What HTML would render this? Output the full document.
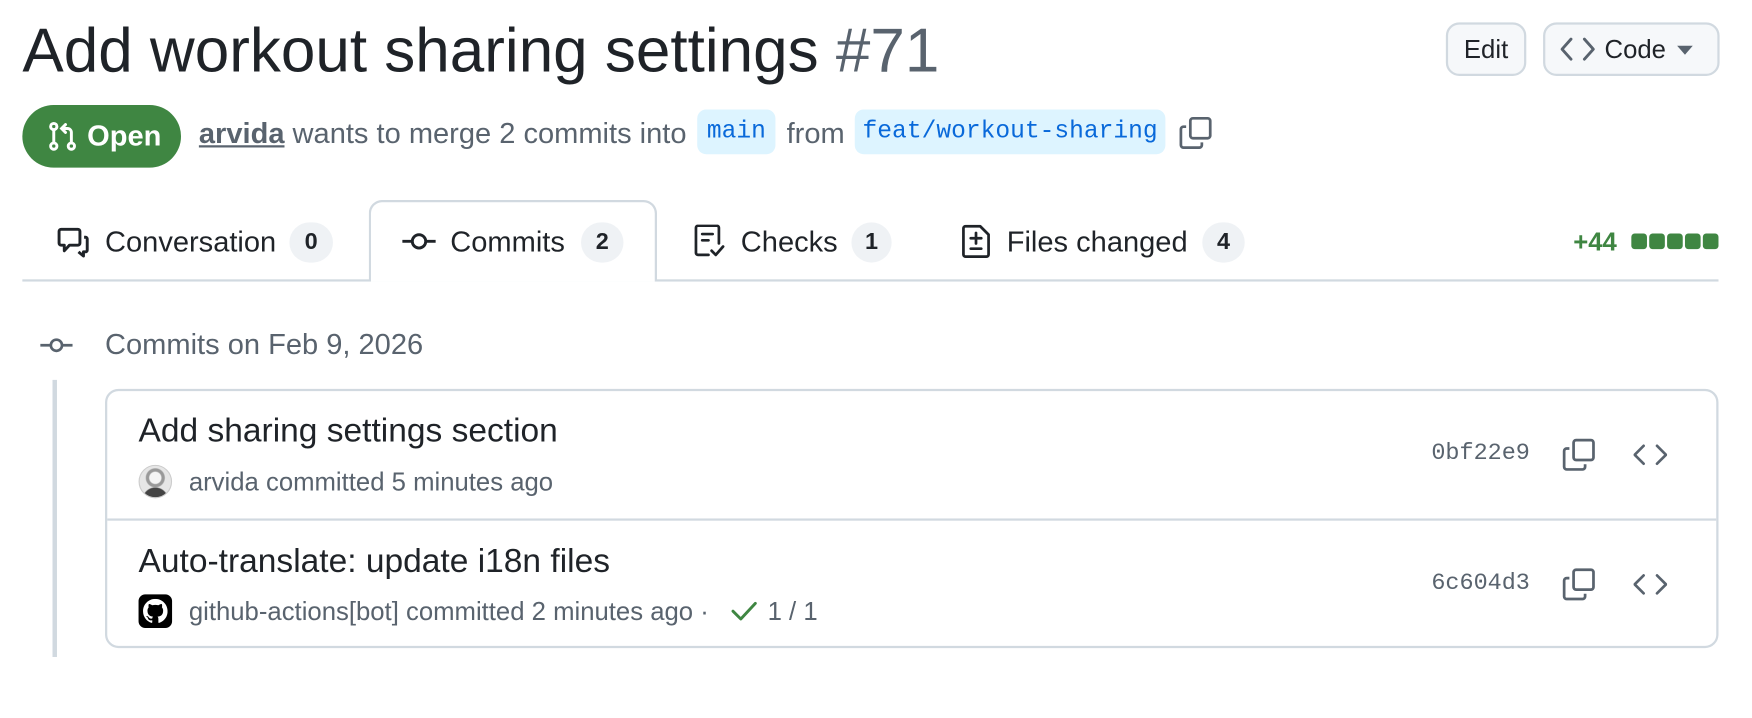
<!DOCTYPE html>
<html><head><meta charset="utf-8"><style>
body{margin:0;width:1752px;height:718px;background:#fff;font-family:"Liberation Sans",Helvetica,Arial,sans-serif;color:#1f2328;position:relative;overflow:hidden}
#w{position:absolute;left:0;top:0;width:1568px;height:643px;transform:scale(1.11735);transform-origin:0 0}
.a{position:absolute;white-space:nowrap}
.mono{font-family:"Liberation Mono","DejaVu Sans Mono",monospace}
.cnt{position:absolute;top:199px;height:36px;border-radius:18px;background:#eff2f5;font-size:21px;font-weight:bold;line-height:36px;text-align:center;color:#1f2328}
.tab{font-size:26px;line-height:26px;top:203px}
.btn{position:absolute;top:20px;height:48px;border:2px solid #d1d9e0;border-radius:12px;background:#f6f8fa;box-sizing:border-box;font-size:23px;line-height:44px}
svg{position:absolute}
</style></head><body><div id="w">
<div class="a" style="left:20px;top:17px;font-size:55.5px;line-height:56px">Add workout sharing settings <span style="color:#59636e">#71</span></div>

<div class="btn" style="left:1294px;width:72px;text-align:center">Edit</div>
<div class="btn" style="left:1381px;width:158px;padding-left:53px">Code</div>
<svg style="left:1396px;top:32px" width="32" height="24" viewBox="0 0 32 24" fill="none" stroke="#59636e" stroke-width="2.6" stroke-linecap="round" stroke-linejoin="round"><path d="M10 3 2 12l8 9M22 3l8 9-8 9"/></svg>
<svg style="left:1500px;top:40px" width="16" height="10" viewBox="0 0 16 10"><path d="M1 1h14L8 9z" fill="#59636e"/></svg>

<div class="a" style="left:20px;top:94px;width:142px;height:56px;border-radius:28px;background:#3f8642;"></div>
<svg style="left:42px;top:108px" width="28" height="28" viewBox="0 0 16 16" fill="none" stroke="#fff" stroke-width="1.5" stroke-linecap="round"><circle cx="3.5" cy="3" r="1.6"/><circle cx="3.5" cy="13" r="1.6"/><circle cx="12.5" cy="13" r="1.6"/><path d="M3.5 4.6v6.8M12.5 11.4V6a2 2 0 0 0-2-2H8M9.5 2 7.5 4l2 2"/></svg>
<div class="a" style="left:78px;top:108px;font-size:26px;line-height:26px;font-weight:bold;color:#fff">Open</div>

<div class="a" style="left:178px;top:106px;font-size:26px;line-height:26px;color:#59636e"><b style="color:#59636e;text-decoration:underline">arvida</b> wants to merge 2 commits into</div>
<div class="a mono" style="left:624px;top:98px;height:40px;width:70px;box-sizing:border-box;text-align:center;border-radius:8px;background:#ddf4ff;color:#0969da;font-size:22px;line-height:40px">main</div>
<div class="a" style="left:704px;top:106px;font-size:26px;line-height:26px;color:#59636e">from</div>
<div class="a mono" style="left:765px;top:98px;height:40px;width:278px;box-sizing:border-box;text-align:center;border-radius:8px;background:#ddf4ff;color:#0969da;font-size:22px;line-height:40px">feat/workout-sharing</div>
<svg style="left:1055px;top:104px" width="30" height="30" viewBox="0 0 16 16" fill="none" stroke="#59636e" stroke-width="1.3" stroke-linejoin="round"><rect x="5.5" y="1" width="9.5" height="9.5" rx="1.2"/><path d="M3.5 5H2.2A1.2 1.2 0 0 0 1 6.2v7.6A1.2 1.2 0 0 0 2.2 15h7.6a1.2 1.2 0 0 0 1.2-1.2V12.5"/></svg>

<div class="a" style="left:20px;top:250px;width:1518px;height:2px;background:#d1d9e0"></div>
<div class="a" style="left:330px;top:179px;width:258px;height:73px;box-sizing:border-box;border:2px solid #d1d9e0;border-bottom:none;border-radius:12px 12px 0 0;background:#fff"></div>

<svg style="left:50px;top:203px" width="30" height="28" viewBox="0 0 16 15" fill="none" stroke="#1f2328" stroke-width="1.4" stroke-linejoin="round"><path d="M1.5 2.2A1 1 0 0 1 2.5 1.2h8a1 1 0 0 1 1 1v5.6a1 1 0 0 1-1 1H6.5L4 11.5V8.8H2.5a1 1 0 0 1-1-1z"/><path d="M13.5 5h.8a.8.8 0 0 1 .7.8v5.4a.8.8 0 0 1-.8.8h-1v2l-2.4-2"/></svg>
<div class="a tab" style="left:94px">Conversation</div>
<div class="cnt" style="left:259px;width:39px">0</div>

<svg style="left:360px;top:204px" width="30" height="24" viewBox="0 0 30 24" fill="none" stroke="#1f2328" stroke-width="2.6"><circle cx="15" cy="12" r="6"/><path d="M0 12h9M21 12h9"/></svg>
<div class="a tab" style="left:403px">Commits</div>
<div class="cnt" style="left:520px;width:38px">2</div>

<svg style="left:621px;top:201px" width="28" height="30" viewBox="0 0 15 16" fill="none" stroke="#1f2328" stroke-width="1.3" stroke-linecap="round" stroke-linejoin="round"><path d="M7 14.5H2a1 1 0 0 1-1-1v-12a1 1 0 0 1 1-1h9a1 1 0 0 1 1 1V9"/><path d="M4 4.5h5M4 7.5h3M8.5 12.5l2 2 3.5-4"/></svg>
<div class="a tab" style="left:663px">Checks</div>
<div class="cnt" style="left:762px;width:36px">1</div>

<svg style="left:860px;top:201px" width="27" height="30" viewBox="0 0 14 16" fill="none" stroke="#1f2328" stroke-width="1.3" stroke-linejoin="round"><path d="M2 .8h7l4 4v9.5a1 1 0 0 1-1 1H2a1 1 0 0 1-1-1V1.8a1 1 0 0 1 1-1z"/><path d="M7 4v5M4.5 6.5h5M4.5 11.5h5" stroke-linecap="round"/></svg>
<div class="a tab" style="left:901px">Files changed</div>
<div class="cnt" style="left:1076px;width:38px">4</div>

<div class="a" style="left:1408px;top:205px;font-size:23px;line-height:23px;font-weight:bold;color:#3f8642">+44</div>
<div class="a" style="left:1460px;top:209px;display:flex;gap:2px">
<span style="width:14px;height:14px;background:#3f8642;border-radius:3px"></span><span style="width:14px;height:14px;background:#3f8642;border-radius:3px"></span><span style="width:14px;height:14px;background:#3f8642;border-radius:3px"></span><span style="width:14px;height:14px;background:#3f8642;border-radius:3px"></span><span style="width:14px;height:14px;background:#3f8642;border-radius:3px"></span></div>

<svg style="left:36px;top:299px" width="29" height="20" viewBox="0 0 29 20" fill="none" stroke="#59636e" stroke-width="2.4"><circle cx="14.5" cy="10" r="5"/><path d="M0 10h9.5M19.5 10h9.5"/></svg>
<div class="a" style="left:94px;top:295px;font-size:26px;line-height:26px;color:#59636e">Commits on Feb 9, 2026</div>
<div class="a" style="left:47px;top:340px;width:4px;height:248px;background:#d1d9e0"></div>

<div class="a" style="left:94px;top:348px;width:1444px;height:232px;box-sizing:border-box;border:2px solid #d1d9e0;border-radius:12px"></div>
<div class="a" style="left:96px;top:464px;width:1440px;height:2px;background:#d1d9e0"></div>

<div class="a" style="left:124px;top:371px;font-size:30px;line-height:30px">Add sharing settings section</div>
<div class="a" style="left:124px;top:416px;width:30px;height:30px;border-radius:15px;background:radial-gradient(circle at 50% 38%,#f4f4f4 0 5px,#999 6px 8px,transparent 9px),radial-gradient(circle at 50% 110%,#444 0 11px,transparent 12px),#e6e6e6;border:1px solid #ccc;box-sizing:border-box"></div>
<div class="a" style="left:169px;top:420px;font-size:23px;line-height:23px;color:#59636e">arvida committed 5 minutes ago</div>
<div class="a mono" style="left:1281px;top:396px;font-size:21px;line-height:22px;color:#59636e">0bf22e9</div>

<div class="a" style="left:124px;top:488px;font-size:30px;line-height:30px">Auto-translate: update i18n files</div>
<div class="a" style="left:124px;top:532px;width:30px;height:30px;border-radius:6px;background:#000"></div>
<svg style="left:128px;top:536px" width="22" height="22" viewBox="0 0 16 16"><path fill="#fff" d="M8 0C3.58 0 0 3.58 0 8c0 3.54 2.290 6.53 5.47 7.59.4.07.55-.17.55-.38v-1.33c-2.23.48-2.7-1.07-2.7-1.07-.36-.93-.89-1.170-.89-1.17-.73-.5.05-.49.05-.49.8.06 1.23.83 1.23.83.71 1.22 1.87.87 2.33.66.07-.52.28-.87.5-1.070-1.78-.2-3.64-.89-3.64-3.95 0-.87.31-1.59.82-2.15-.08-.2-.36-1.02.08-2.12 0 0 .67-.21 2.2.82a7.6 7.6 0 0 1 4 0c1.53-1.04 2.2-.82 2.2-.82.44 1.1.16 1.92.08 2.12.51.56.82 1.27.82 2.15 0 3.07-1.87 3.75-3.65 3.95.29.25.54.73.54 1.48v2.2c0 .21.15.46.55.38A8.01 8.01 0 0 0 16 8c0-4.42-3.580-8-8-8z"/></svg>
<div class="a" style="left:169px;top:536px;font-size:23px;line-height:23px;color:#59636e">github-actions[bot] committed 2 minutes ago ·</div>
<svg style="left:654px;top:536px" width="24" height="22" viewBox="0 0 24 22" fill="none" stroke="#3f8642" stroke-width="2.6" stroke-linecap="round" stroke-linejoin="round"><path d="M2 11l7 7L22 4"/></svg>
<div class="a" style="left:687px;top:536px;font-size:23px;line-height:23px;color:#59636e">1 / 1</div>
<div class="a mono" style="left:1281px;top:512px;font-size:21px;line-height:22px;color:#59636e">6c604d3</div>

<svg style="left:1398px;top:392px" width="30" height="30" viewBox="0 0 16 16" fill="none" stroke="#59636e" stroke-width="1.3" stroke-linejoin="round"><rect x="5.5" y="1" width="9.5" height="9.5" rx="1.2"/><path d="M3.5 5H2.2A1.2 1.2 0 0 0 1 6.2v7.6A1.2 1.2 0 0 0 2.2 15h7.6a1.2 1.2 0 0 0 1.2-1.2V12.5"/></svg>
<svg style="left:1462px;top:397px" width="30" height="20" viewBox="0 0 30 20" fill="none" stroke="#59636e" stroke-width="2.4" stroke-linecap="round" stroke-linejoin="round"><path d="M9 2 1 10l8 8M21 2l8 8-8 8"/></svg>
<svg style="left:1398px;top:508px" width="30" height="30" viewBox="0 0 16 16" fill="none" stroke="#59636e" stroke-width="1.3" stroke-linejoin="round"><rect x="5.5" y="1" width="9.5" height="9.5" rx="1.2"/><path d="M3.5 5H2.2A1.2 1.2 0 0 0 1 6.2v7.6A1.2 1.2 0 0 0 2.2 15h7.6a1.2 1.2 0 0 0 1.2-1.2V12.5"/></svg>
<svg style="left:1462px;top:513px" width="30" height="20" viewBox="0 0 30 20" fill="none" stroke="#59636e" stroke-width="2.4" stroke-linecap="round" stroke-linejoin="round"><path d="M9 2 1 10l8 8M21 2l8 8-8 8"/></svg>
</div></body></html>
